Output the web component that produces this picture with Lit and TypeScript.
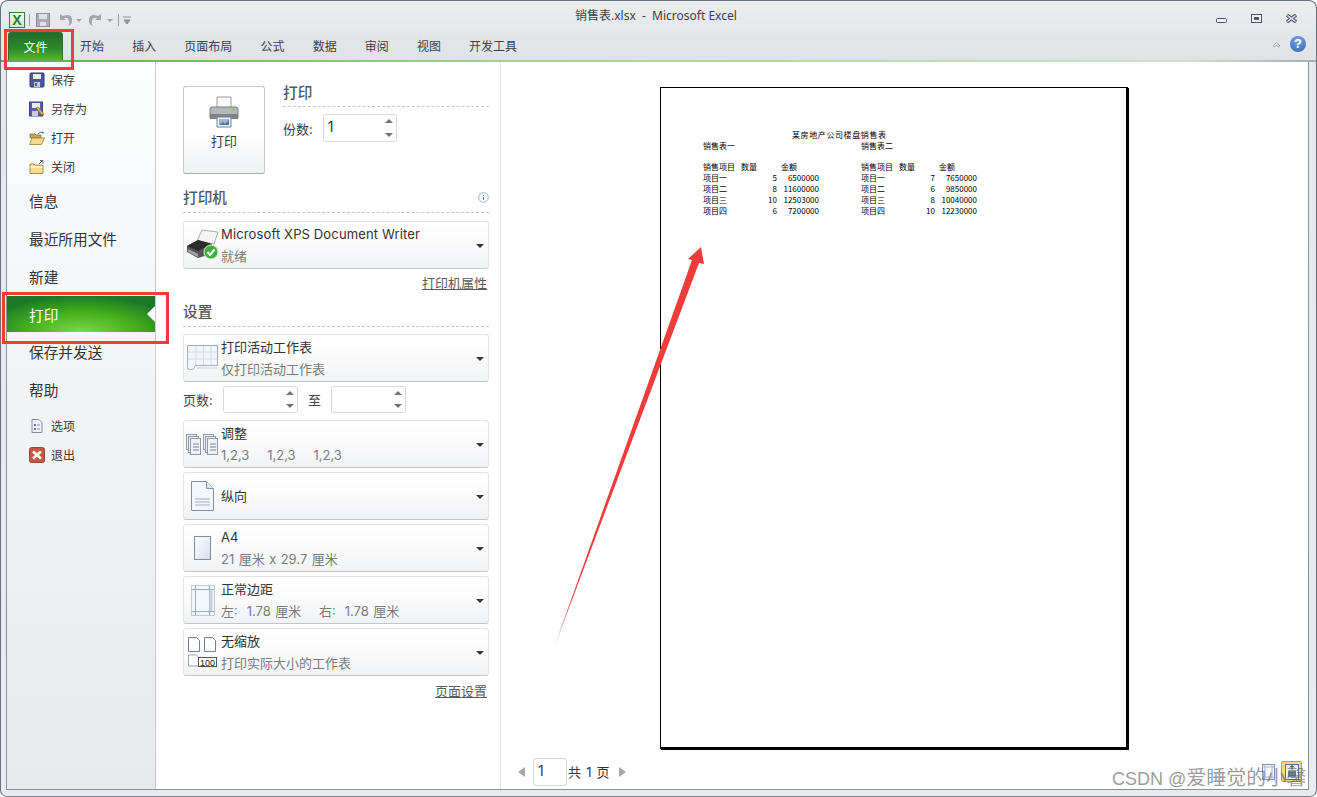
import { LitElement, html, css, svg } from "lit";
import { customElement } from "lit/decorators.js";

const spin = html`<span class="spin"><i class="up"></i><i class="dn"></i></span>`;

const icons: Record<string, unknown> = {
  save: svg`<svg width="16" height="16" viewBox="0 0 16 16"><rect x="1" y="1" width="14" height="14" rx="1" fill="#4a55a8" stroke="#2f3a80"/><rect x="4" y="2" width="8" height="5" fill="#e8eaf4"/><rect x="5" y="10" width="6" height="5" fill="#c9ccd8"/><rect x="6" y="11" width="2" height="3" fill="#4a55a8"/></svg>`,
  saveas: svg`<svg width="16" height="16" viewBox="0 0 16 16"><rect x="0.5" y="1" width="13" height="14" fill="#5560aa" stroke="#39447f"/><rect x="3" y="2" width="8" height="5" fill="#eceef6"/><rect x="3" y="10" width="6" height="5" fill="#c9ccd8"/><path d="M7 7l6 7 2-1-6-7z" fill="#e9b54a" stroke="#8a6a2a" stroke-width=".7"/><path d="M13 14l2 1-1-2z" fill="#c0392b"/></svg>`,
  open: svg`<svg width="16" height="16" viewBox="0 0 16 16"><path d="M1 4h5l1 1h5v3H1z" fill="#c9a858" stroke="#8c7434" stroke-width=".8"/><path d="M.5 14.500L3 8h12.500l-3 6.500z" fill="#f4d98a" stroke="#9a8038" stroke-width=".8"/><path d="M9 4c2-2 3-2 5-1.500" fill="none" stroke="#4a6a9a"/><path d="M14 1l1 2-2 1z" fill="#4a6a9a"/></svg>`,
  close: svg`<svg width="16" height="16" viewBox="0 0 16 16"><path d="M1 5h4l1 1h8v8.500H1z" fill="#f5dd8c" stroke="#8f7a3c" stroke-width=".8"/><path d="M1.500 7h12v2h-12z" fill="#fff3c2"/><path d="M10 5l3-3M11 1.500h3v3" fill="none" stroke="#56657a" stroke-width="1"/></svg>`,
  opt: svg`<svg width="16" height="16" viewBox="0 0 16 16"><path d="M3 1.500h7l3 3v10H3z" fill="#eef2f7" stroke="#7f8ea3"/><rect x="5" y="6" width="2" height="2" fill="#66758c"/><rect x="5" y="10" width="2" height="2" fill="#66758c"/><path d="M8 7h3M8 11h3" stroke="#8c98a8"/></svg>`,
  exit: svg`<svg width="16" height="16" viewBox="0 0 16 16"><rect x=".5" y=".5" width="15" height="15" rx="2" fill="#c8553f" stroke="#8c4a44"/><path d="M4 4.500l8 7M12 4.500l-8 7" stroke="#fff" stroke-width="2.600"/></svg>`,
  printer: svg`<svg width="32" height="32" viewBox="0 0 32 32"><path d="M9 1h14v11H9z" fill="#f8f8f8" stroke="#9a9a9a"/><path d="M2 13q0-2 2-2h24q2 0 2 2v9H2z" fill="#b5b8bb" stroke="#7c7f83"/><path d="M2 18h28v5H2z" fill="#7f8286"/><rect x="24" y="13" width="3" height="1.500" fill="#7ccf5a"/><path d="M9 21h14v10H9z" fill="#eef3fa" stroke="#6d7f9c"/><path d="M11 23h10v6H11z" fill="#9cb6da"/><path d="M11 29l4-3 2 2 4-4v5z" fill="#4e73a8"/></svg>`,
  printer2: svg`<svg width="34" height="32" viewBox="0 0 34 32"><path d="M11 12L16 1l16 2-4 12z" fill="#f4f4f4" stroke="#999" stroke-width=".8"/><path d="M1 17l11-6 14 4-1 10-13 4-11-6z" fill="#555"/><path d="M1 17l11 5 14-7-14-4z" fill="#2d2d2d"/><path d="M2 20l10 5v3L2 23z" fill="#9ea4ab"/><circle cx="25" cy="23" r="7" fill="#3fae3a" stroke="#d8f2cf"/><path d="M21.500 23l2.500 3 4.500-5.500" fill="none" stroke="#fff" stroke-width="2"/></svg>`,
  sheet: svg`<svg width="31" height="26" viewBox="0 0 31 26"><path d="M.5.500h30v20H9q-1 0-1.500 1v1q-.5 2-3 2H2.500q-2 0-2-2z" fill="#f2f5fa" stroke="#a3aec0"/><path d="M9 1v19M16.500 1v19M24 1v19M1 7h29M1 14h29" stroke="#d3dbe8"/><path d="M10 23h20" stroke="#d9dce0" stroke-width="1.500"/></svg>`,
  collate: svg`<svg width="33" height="21" viewBox="0 0 33 21"><g fill="#eef1f6" stroke="#8f99a8"><rect x=".5" y=".5" width="10" height="15"/><rect x="2.500" y="2.500" width="10" height="16"/><rect x="4.500" y="4.500" width="10" height="16"/><rect x="17.500" y=".5" width="10" height="15"/><rect x="19.500" y="2.500" width="10" height="16"/><rect x="21.500" y="4.500" width="10" height="16"/></g><path d="M7 10h6M7 13h6M7 16h6M24 10h6M24 13h6M24 16h6" stroke="#7c8696"/></svg>`,
  portrait: svg`<svg width="23" height="30" viewBox="0 0 23 30"><path d="M.5.500h15l7 7v22H.5z" fill="#f3f6fb" stroke="#7e90ad"/><path d="M15.500.5v7h7" fill="#dfe6f1" stroke="#7e90ad"/><path d="M4 18h15M4 21h15M4 24h15" stroke="#9fb0ca"/></svg>`,
  a4: svg`<svg width="18" height="25" viewBox="0 0 18 25"><defs><linearGradient id="a4g" x1="0" y1="0" x2="1" y2="1"><stop offset="0" stop-color="#fff"/><stop offset="1" stop-color="#d6deec"/></linearGradient></defs><rect x=".5" y=".5" width="16" height="23" fill="url(#a4g)" stroke="#7d8da8"/></svg>`,
  margin: svg`<svg width="24" height="31" viewBox="0 0 24 31"><rect x=".5" y=".5" width="23" height="30" fill="#f3f6fa" stroke="#c2cad8"/><path d="M4.500 .5v30M18.500 .5v30M.5 4.500h23M.5 26.500h23" stroke="#9caabf"/><rect x="18.500" y="5" width="3" height="21" fill="#cbd4e2"/></svg>`,
  scale: svg`<svg width="29" height="30" viewBox="0 0 29 30"><g fill="#fff" stroke="#6f7f97"><path d="M.5.500h8l3 3v11H.5z"/><path d="M16.500.5h8l3 3v11H16.500z"/><path d="M.5 18h8l2 2v9H.5z" stroke="#98a5b8"/></g><rect x="10.500" y="20.500" width="18" height="9" fill="#fff" stroke="#555"/><text x="19.500" y="28.500" font-size="9" font-family="Liberation Sans" text-anchor="middle" fill="#222">100</text></svg>`,
};

@customElement("app-root")
export class AppRoot extends LitElement {
  static styles = css`
    :host { display: block; width: 1317px; height: 797px; position: relative; overflow: hidden;
      font-family: Inter, "Noto Sans CJK SC", sans-serif; font-size: 13px; color: #3c3c3c; background: #fff; }
    .window { height: 797px; box-sizing: border-box; border: 1px solid #69717c; border-bottom-color: #7b828c; border-radius: 8px 8px 7px 7px;
      background: linear-gradient(#ebedef, #dfe2e6 60px, #e6e8ed 62px, #e9ebf0); display: flex; flex-direction: column; overflow: hidden; }
    .title { height: 29px; flex: none; display: flex; align-items: center; position: relative; padding-left: 8px; }
    .title .name { position: absolute; left: 574px; top: 6px; font: 12px/18px "Noto Sans", "Noto Sans CJK SC", sans-serif; color: #3b3f45; white-space: pre; }
    .qat { display: flex; align-items: center; height: 22px; margin-top: 9px; }
    .xl { width: 14px; height: 14px; border: 1px solid #3d7a3f; background: linear-gradient(#f8fbf6, #d5e6cf); display: grid; place-items: center; font: bold 14px/14px "Liberation Sans", sans-serif; color: #1e7d33; }
    .sep { width: 1px; height: 12px; background: #9aa0a8; }
    .winbtns { position: absolute; right: 19px; top: 13px; display: flex; gap: 24px; align-items: flex-end; }
    .tabs { height: 30px; flex: none; display: flex; align-items: flex-end; position: relative; font-size: 12px; color: #3c4047; font-family: "Noto Sans CJK SC", sans-serif; }
    .tab-file { width: 55px; height: 28px; padding-bottom: 1px; margin-left: 7px; box-sizing: border-box; border: 1px solid #2f6b2d; border-bottom: 0; border-radius: 3px 3px 0 0;
      background: linear-gradient(#226b2a, #2f8a2b 60%, #5bb52c); color: #fff; display: grid; place-items: center; }
    .tablist { display: flex; gap: 28.150px; margin-left: 17px; height: 28px; box-sizing: border-box; padding-bottom: 2px; align-items: center; }
    .help { position: absolute; right: 10px; top: 6px; display: flex; gap: 9px; align-items: center; }
    .q { width: 16px; height: 16px; border-radius: 50%; background: radial-gradient(circle at 50% 30%, #7ba7e0, #2f64b4); color: #fff; font: bold 13px/16px "Liberation Sans", sans-serif; text-align: center; }
    .line { height: 2px; flex: none; background: linear-gradient(90deg, #62ad40, #a8d195 40%, #cfe0c8 90%, #a8adb3); }
    .body { flex: 1; display: flex; margin: 0 7px 6px 5px; background: #fff; border: 1px solid #8c9198; border-top: 0; min-height: 0; position: relative; }
    .side { width: 148px; flex: none; background: linear-gradient(#fcfdfd, #e7e9ed); border-right: 1px solid #c8cacd; padding-top: 3px; }
    .mini { height: 29px; display: flex; align-items: center; gap: 6px; padding-left: 22px; font-size: 12px; }
    .big { height: 38px; box-sizing: border-box; padding: 0 0 2px 22px; display: flex; align-items: center; font-size: 14.670px; color: #333; }
    .big.on { height: 36px; margin: 0 0 1px; color: #fff; position: relative; padding-bottom: 0;
      background: radial-gradient(ellipse 100px 36px at 50% 100%, #7fd64a, #45b01a 55%, #1a7a28 100%); }
    .big.on::after { content: ""; position: absolute; right: 0; top: 10px; border: 8px solid transparent; border-right-color: #fff; border-left: 0; }
    .sp1 { height: 1px; }
    .sp2 { height: 2px; }
    .mid { width: 306px; flex: none; padding: 24px 11px 0 27px; border-right: 1px solid #e2e3e5; }
    .top { display: flex; gap: 18px; height: 88px; }
    .pbtn { width: 82px; height: 88px; box-sizing: border-box; border: 1px solid #c5c7ca; border-bottom-color: #a8aaad; border-radius: 3px;
      background: linear-gradient(#fff, #fff 60%, #eff0f2); display: flex; flex-direction: column; align-items: center; padding-top: 9px; gap: 3px; font-size: 13px; }
    .topr { flex: 1; }
    .h { font-size: 14.670px; line-height: 14px; color: #55585d; font-weight: 500; border-bottom: 1px dashed #c4c6c9; height: 20px; display: flex; justify-content: space-between; align-items: flex-start; }
    .copies { display: flex; align-items: center; gap: 10px; margin-top: 7px; }
    .input { box-sizing: border-box; height: 28px; border: 1px solid #d6d8da; border-radius: 3px; position: relative; display: block; background: #fff; font-size: 14px; line-height: 24px; padding-left: 4px; color: #333; }
    .spin i { position: absolute; right: 3px; width: 0; height: 0; border: 4px solid transparent; }
    .up { top: 4px; border-bottom: 4px solid #737373 !important; border-top: 0 !important; }
    .dn { bottom: 4px; border-top: 4px solid #737373 !important; border-bottom: 0 !important; }
    .h2 { margin-top: 14px; height: 24px; line-height: 20px; }
    .h3 { margin-top: 10px; }
    .card { height: 48px; box-sizing: border-box; margin-top: 4px; border: 1px solid #e3e4e6; border-bottom: 1px solid #c2c4c7; border-radius: 3px; background: linear-gradient(#fff, #fbfbfc 50%, #f1f2f4); display: flex; position: relative; }
    .first { margin-top: 8px; }
    .first .tx span { letter-spacing: .14px; }
    .sec { margin-top: 7px; }
    .ic { width: 37px; flex: none; display: grid; place-items: center; }
    .tx { display: flex; flex-direction: column; justify-content: center; gap: 4px; line-height: 18px; color: #333; }
    .tx small { font-size: 13px; color: #7a7c80; line-height: 18px; white-space: pre; word-spacing: .8px; }
    .card::after { content: ""; position: absolute; right: 4px; top: 22px; border: 4px solid transparent; border-top-color: #333; border-bottom: 0; }
    .link { text-align: right; text-decoration: underline; color: #5a5c60; padding-right: 2px; height: 18px; line-height: 18px; margin-top: 5px; }
    .pages { display: flex; align-items: center; margin-top: 4px; height: 27px; color: #444; }
    .pages .input { width: 75px; height: 27px; }
    .prev { flex: 1; position: relative; display: flex; flex-direction: column; min-width: 0; }
    .canvas { height: 659px; margin: 25px 0 0 159px; width: 465px; border: 1px solid #000; border-right-width: 2px; border-bottom-width: 2px; box-shadow: 1px 1px 0 #000; background: #fff; box-sizing: content-box;
      font: 8px/10.800px "Noto Sans CJK SC", sans-serif; color: #000; }
    .sheet { margin: 42px 0 0 42px; width: 280px; }
    .ttl { margin-left: 89px; letter-spacing: .6px; white-space: nowrap; }
    .tbls { display: grid; grid-template-columns: 158px auto; }
    .t { display: grid; grid-template-columns: 38px 36px 42px; grid-auto-rows: 10.800px; white-space: nowrap; }
    .t .r { text-align: right; }
    .t .w { grid-column: 1 / -1; }
    .t .amt { padding-left: 4px; }
    .pager { display: flex; align-items: center; margin: 9px 0 0 17px; height: 27px; color: #333; word-spacing: 1.5px; }
    .pager .input { width: 34px; height: 28px; margin: 0 1px 0 8px; }
    .tr { width: 0; height: 0; border: 5px solid transparent; }
    .tl { border-right: 7px solid #a5a7a9; border-left: 0; }
    .trr { border-left: 7px solid #a5a7a9; border-right: 0; margin-left: 9px; }
    .br { position: absolute; right: 6px; bottom: 7px; display: flex; gap: 6px; align-items: center; }
    .zoomb { width: 21px; height: 21px; box-sizing: border-box; border: 1px solid #c99a2e; background: #fbd77b; border-radius: 2px; display: grid; place-items: center; }
    .redbox { position: absolute; border: 3px solid #f23c3c; box-sizing: border-box; pointer-events: none; }
    .rb1 { left: 4px; top: 29px; width: 70px; height: 41px; }
    .rb2 { left: 2px; top: 292px; width: 167px; height: 52px; }
    .arrow { position: absolute; left: 0; top: 0; pointer-events: none; }
    .wm { position: absolute; left: 1112px; top: 767px; font: 18px/22px "Liberation Sans", "Noto Sans CJK SC", sans-serif; color: rgba(90,90,90,.62); white-space: nowrap; }
    .wm span { font-size: 20px; }
    .m1 { margin-left: 4px; } .m2 { margin-left: 6px; } .m3 { margin-left: 7px; } .m4 { margin-left: 5px; }
  `;

  private table(name: string, rows: string[][]) {
    return html`<div class="t"><div class="w">${name}</div><div class="w">&nbsp;</div>
      <div>销售项目</div><div>数量</div><div class="amt">金额</div>
      ${rows.map((r) => html`<div>${r[0]}</div><div class="r">${r[1]}</div><div class="r">${r[2]}</div>`)}</div>`;
  }

  private card(icon: string, title: string, sub?: string, cls = "") {
    return html`<div class="card ${cls}"><div class="ic">${icons[icon]}</div><div class="tx"><span>${title}</span>${sub ? html`<small>${sub}</small>` : ""}</div></div>`;
  }

  render() {
    const mini = (i: string, t: string) => html`<div class="mini">${icons[i]}<span>${t}</span></div>`;
    return html`<div class="window">
      <div class="title">
        <div class="qat">
          <span class="xl">X</span><span class="sep m1"></span>
          <svg class="m2" width="14" height="14" viewBox="0 0 14 14"><rect x=".5" y=".5" width="13" height="13" fill="#a9adb3" stroke="#8d9197"/><rect x="3" y="1" width="8" height="5" fill="#dfe1e4"/><rect x="4" y="9" width="6" height="4" fill="#dfe1e4"/></svg>
          <svg class="m3" width="26" height="14" viewBox="0 0 26 14"><path d="M3 1v6h6L7 5q4-1 5 3t-2 5q6-1 5-7T6 3z" fill="#a2a6ac"/><path d="M19 6h6l-3 3z" fill="#a2a6ac"/></svg>
          <svg class="m4" width="26" height="14" viewBox="0 0 26 14"><path d="M13 1v6H7l2-2q-4-1-5 3t2 5Q0 12 1 6t9-3z" fill="#a2a6ac"/><path d="M19 6h6l-3 3z" fill="#a2a6ac"/></svg>
          <span class="sep m1"></span>
          <svg class="m1" width="8" height="10" viewBox="0 0 8 10"><path d="M0 2h8M1 5h6l-3 4z" stroke="#8d9197" fill="#8d9197"/></svg>
        </div>
        <div class="name">销售表.xlsx  -  Microsoft Excel</div>
        <div class="winbtns">
          <svg width="11" height="5" viewBox="0 0 11 5"><rect x=".5" y=".5" width="10" height="4" rx="1" fill="#eef0f3" stroke="#4d5566"/></svg>
          <svg width="11" height="9" viewBox="0 0 11 9"><rect x=".5" y=".5" width="10" height="8" fill="#eef0f3" stroke="#4d5566"/><rect x="3" y="3" width="5" height="3" fill="#4d5566"/></svg>
          <svg width="11" height="9" viewBox="0 0 11 9"><path d="M1 1l9 7M10 1l-9 7" stroke="#4d5566" stroke-width="3.400"/><path d="M1.500 1.500l8 6M9.500 1.500l-8 6" stroke="#eef0f3" stroke-width="1.400"/></svg>
        </div>
      </div>
      <div class="tabs">
        <div class="tab-file">文件</div>
        <div class="tablist"><span>开始</span><span>插入</span><span>页面布局</span><span>公式</span><span>数据</span><span>审阅</span><span>视图</span><span>开发工具</span></div>
        <div class="help">
          <svg width="9" height="7" viewBox="0 0 9 7"><path d="M1 5l3.500-3.500L8 5 6.500 6 4.500 4 2.500 6z" fill="#eef0f2" stroke="#a5a8ad"/></svg>
          <div class="q">?</div>
        </div>
      </div>
      <div class="line"></div>
      <div class="body">
        <div class="side">
          ${mini("save", "保存")}${mini("saveas", "另存为")}${mini("open", "打开")}${mini("close", "关闭")}
          <div class="sp1"></div>
          <div class="big">信息</div><div class="big">最近所用文件</div><div class="big">新建</div>
          <div class="big on">打印</div>
          <div class="big">保存并发送</div><div class="big">帮助</div>
          <div class="sp2"></div>
          ${mini("opt", "选项")}${mini("exit", "退出")}
        </div>
        <div class="mid">
          <div class="top">
            <div class="pbtn">${icons.printer}<span>打印</span></div>
            <div class="topr">
              <div class="h">打印</div>
              <div class="copies"><span>份数:</span><span class="input" style="width:74px">1${spin}</span></div>
            </div>
          </div>
          <div class="h h2"><span>打印机</span><svg width="11" height="11" viewBox="0 0 11 11" style="margin-top:4px"><circle cx="5.500" cy="5.500" r="4.800" fill="#fff" stroke="#8db2dd"/><path d="M5.500 3v1M5.500 5v3" stroke="#4a7fc0"/></svg></div>
          ${this.card("printer2", "Microsoft XPS Document Writer", "就绪", "first")}
          <div class="link">打印机属性</div>
          <div class="h h2 h3">设置</div>
          ${this.card("sheet", "打印活动工作表", "仅打印活动工作表", "sec")}
          <div class="pages"><span style="width:40px">页数:</span><span class="input">${spin}</span><span style="width:33px;text-align:center">至</span><span class="input">${spin}</span></div>
          ${this.card("collate", "调整", "1,2,3    1,2,3    1,2,3", "sec")}
          ${this.card("portrait", "纵向")}
          ${this.card("a4", "A4", "21 厘米 x 29.7 厘米")}
          ${this.card("margin", "正常边距", "左:  1.78 厘米    右:  1.78 厘米")}
          ${this.card("scale", "无缩放", "打印实际大小的工作表")}
          <div class="link" style="margin-top:6px">页面设置</div>
        </div>
        <div class="prev">
          <div class="canvas"><div class="sheet">
            <div class="ttl">某房地产公司楼盘销售表</div>
            <div class="tbls">
              ${this.table("销售表一", [["项目一", "5", "6500000"], ["项目二", "8", "11600000"], ["项目三", "10", "12503000"], ["项目四", "6", "7200000"]])}
              ${this.table("销售表二", [["项目一", "7", "7650000"], ["项目二", "6", "9850000"], ["项目三", "8", "10040000"], ["项目四", "10", "12230000"]])}
            </div>
          </div></div>
          <div class="pager"><span class="tr tl"></span><span class="input">1</span><span>共 1 页</span><span class="tr trr"></span></div>
          <div class="br">
            <svg width="13" height="16" viewBox="0 0 13 16"><rect x=".5" y=".5" width="12" height="15" fill="#f4f7fb" stroke="#7e90ad"/><path d="M3 .5v15M10 .5v15M.5 3h12M.5 13h12" stroke="#a9b8cf"/></svg>
            <div class="zoomb"><svg width="14" height="16" viewBox="0 0 14 16"><rect x=".5" y=".5" width="13" height="15" fill="#eaf0f8" stroke="#5d7390"/><path d="M3 7h8v6H3z" fill="#6b87ad"/><path d="M7 2v3M5 3.500l2-2 2 2" stroke="#334" fill="none"/></svg></div>
          </div>
        </div>
      </div>
    </div>
    <div class="redbox rb1"></div>
    <div class="redbox rb2"></div>
    <svg class="arrow" width="1317" height="797" viewBox="0 0 1317 797"><path d="M555 645L692 260 688 259 701 247 704 264 699 263z" fill="#f23c3c"/></svg>
    <div class="wm">CSDN @<span>爱睡觉的小馨</span></div>`;
  }
}
